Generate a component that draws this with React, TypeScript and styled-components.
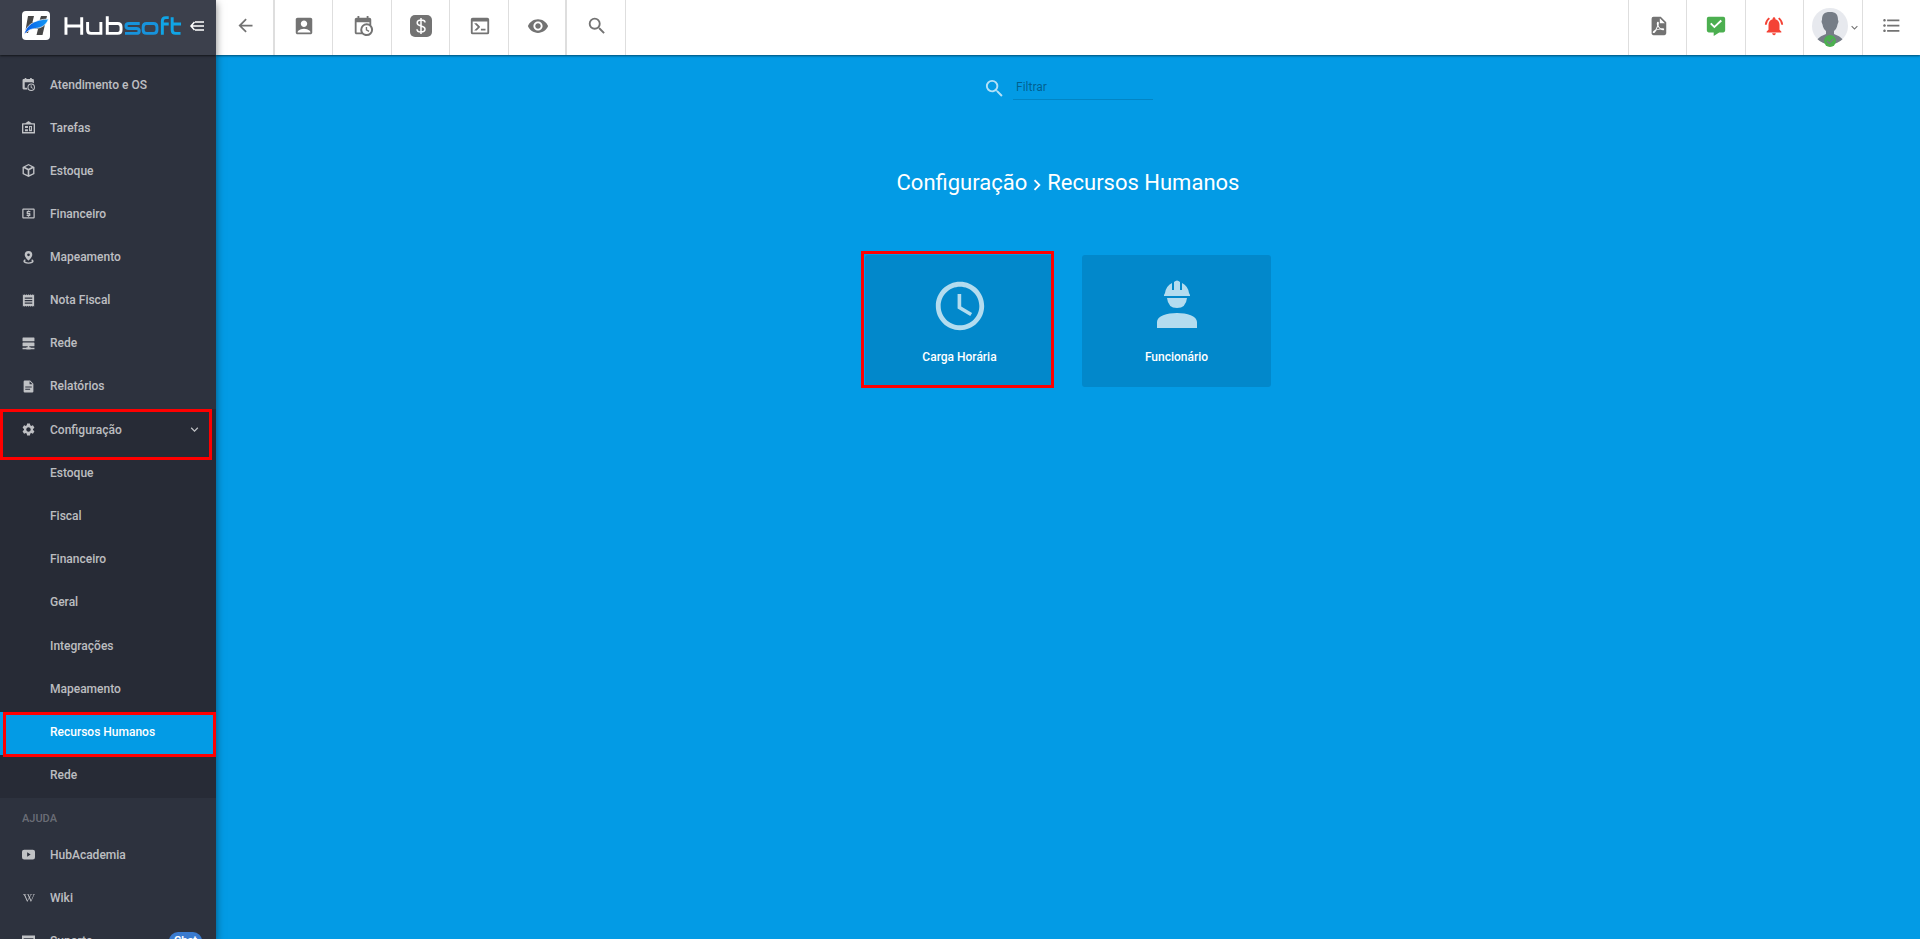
import React from 'react';
import styled, { createGlobalStyle } from 'styled-components';
import {
  MdAccountBox, MdVisibility, MdSearch, MdArrowBack, MdNotificationsActive, MdFormatListBulleted,
  MdReceipt, MdSettings, MdLocalAtm, MdKeyboardArrowDown, MdAccessTime, MdChevronRight,
} from 'react-icons/md';
import { FaWikipediaW } from 'react-icons/fa';

const Global = createGlobalStyle`
  * { box-sizing: border-box; }
  body { margin: 0; font-family: Roboto, "Liberation Sans", sans-serif; font-size: 13px; background: #039be5; }
  button { font: inherit; border: 0; background: none; padding: 0; color: inherit; cursor: pointer; }
  ul { list-style: none; margin: 0; padding: 0; }
  svg { display: block; flex: none; }
`;

const Page = styled.div`display: flex; height: 100vh; overflow: hidden;`;

const Sidebar = styled.aside`
  position: relative; z-index: 2; flex: 0 0 216px; overflow: hidden;
  background: #2d323e; color: rgba(255, 255, 255, 0.7);
  box-shadow: 0 3px 8px rgba(0, 0, 0, 0.5);
`;
const Brand = styled.header`
  display: flex; align-items: center; height: 55px; padding: 0 12px 4px 22px;
  background: #3c404c; box-shadow: 0 1px 2px rgba(0, 0, 0, 0.6); position: relative;
`;
const Wordmark = styled.svg`margin-left: 14px;`;
const Collapse = styled.button`margin-left: 7px; color: #fff;`;
const Nav = styled.nav`padding-top: 9px;`;
const Rows = styled.ul<{ $height: number; $dark?: boolean }>`
  display: grid; grid-auto-rows: 1fr; height: ${p => p.$height}px;
  background: ${p => (p.$dark ? 'rgba(0, 0, 0, 0.13)' : 'transparent')};
`;
const Item = styled.li`position: relative; display: flex;`;
const Link = styled.a<{ $active?: boolean; $child?: boolean }>`
  flex: 1; display: flex; align-items: center; gap: 15px;
  padding: 0 14px 2px ${p => (p.$child ? 50 : 22)}px;
  color: ${p => (p.$active ? '#fff' : 'inherit')};
  background: ${p => (p.$active ? '#039be5' : 'transparent')};
  font-size: 12px; line-height: 18px; font-weight: 500; text-decoration: none;
`;
const Glyph = styled.span`flex: 0 0 13px; min-width: 0; display: flex; justify-content: center;`;
const Label = styled.span`flex: 1;`;
const Section = styled.h2`
  margin: 0; height: 36px; padding: 12px 22px 0; color: rgba(255, 255, 255, 0.3);
  font-size: 11px; line-height: 18px; font-weight: 500;
`;
const Chat = styled.span`
  background: #3a7bd0; color: #fff; border-radius: 9px; padding: 0 5px; height: 18px;
  font-size: 11px; line-height: 18px; font-weight: 700;
`;
const Mark = styled.span<{ $inset: string }>`
  position: absolute; inset: ${p => p.$inset}; border: 3px solid #f00; pointer-events: none; z-index: 3;
`;

const Main = styled.main`flex: 1; min-width: 0; display: flex; flex-direction: column; background: #039be5;`;
const Toolbar = styled.div`
  flex: 0 0 55px; display: flex; justify-content: space-between; background: #fff; color: #737373;
  box-shadow: 0 1px 2px rgba(0, 0, 0, 0.5); position: relative;
`;
const Group = styled.div<{ $width: number; $end?: boolean }>`
  display: grid; grid-auto-flow: column; grid-auto-columns: 1fr; width: ${p => p.$width}px;
  > button {
    border: 0 solid #dedede; border-width: ${p => (p.$end ? '0 0 0 1px' : '0 1px 0 0')};
    padding-left: ${p => (p.$end ? 0 : 2)}px;
  }
`;
const Tool = styled.button<{ $color?: string; $heavy?: boolean; $user?: boolean }>`
  display: flex; align-items: center; justify-content: center; padding-bottom: 4px;
  color: ${p => p.$color || 'inherit'};
  && { ${p => (p.$heavy ? 'border-right-width: 2px;' : '')} ${p => (p.$user ? 'padding: 0 0 0 8px;' : '')} }
`;
const Content = styled.section`display: flex; flex-direction: column; align-items: center; color: #fff;`;
const Filter = styled.label`
  display: flex; align-items: center; gap: 7px; margin: 20px 0 0; color: rgba(255, 255, 255, 0.7);
  svg { margin-top: 2px; }
`;
const Input = styled.input`
  width: 140px; height: 25px; padding: 0 3px 1px; border: 0; border-bottom: 1px solid rgba(0, 0, 0, 0.14);
  background: none; outline: 0; color: #fff; font: 12px/20px Roboto, sans-serif;
  &::placeholder { color: rgba(0, 0, 0, 0.4); opacity: 1; }
`;
const Title = styled.h1`
  display: flex; align-items: center; margin: 67px 0 0; font-size: 22px; line-height: 32px; font-weight: 400;
  svg { margin: 4px -1px 0; }
`;
const Cards = styled.div`display: flex; gap: 28px; margin-top: 56px;`;
const CardWrap = styled.div`position: relative; display: flex;`;
const Card = styled.button`
  width: 189px; height: 132px; display: flex; flex-direction: column; align-items: center; gap: 12px;
  padding-top: 22px; border-radius: 3px;
  && { background: #0288cb; color: #fff; }
  font-size: 12px; line-height: 20px; font-weight: 500;
  svg { color: #b3dcef; }
`;

const P = ({ d, size = 22 }: { d: string; size?: number }) => (
  <svg width={size} height={size} viewBox="0 0 24 24" fill="currentColor" fillRule="evenodd" aria-hidden="true"><path d={d} /></svg>
);

const calendarClock = 'M15,13H16.5V15.82L18.94,17.23L18.19,18.53L15,16.69V13M19,8H5V19H9.67C9.24,18.09 9,17.07 9,16A7,7 0 0,1 16,9C17.07,9 18.09,9.24 19,9.67V8M5,21C3.89,21 3,20.1 3,19V5C3,3.89 3.89,3 5,3H6V1H8V3H16V1H18V3H19A2,2 0 0,1 21,5V11.1C22.24,12.36 23,14.09 23,16A7,7 0 0,1 16,23C14.09,23 12.36,22.24 11.1,21H5M16,11.15A4.85,4.85 0 0,0 11.15,16C11.15,18.68 13.32,20.85 16,20.85A4.85,4.85 0 0,0 20.85,16C20.85,13.32 18.68,11.15 16,11.15Z';
const consoleIcon = 'M20,19V7H4V19H20M20,3A2,2 0 0,1 22,5V19A2,2 0 0,1 20,21H4A2,2 0 0,1 2,19V5C2,3.89 2.9,3 4,3H20M13,17V15H18V17H13M9.58,13L5.57,9H8.4L11.7,12.3C12.09,12.69 12.09,13.33 11.7,13.72L8.42,17H5.59L9.58,13Z';
const pdf = 'M14,9H19.5L14,3.5V9M7,2H15L21,8V20A2,2 0 0,1 19,22H7C5.89,22 5,21.1 5,20V4A2,2 0 0,1 7,2M11.93,12.44C12.34,13.34 12.86,14.08 13.46,14.59L13.87,14.91C13,15.07 11.8,15.35 10.53,15.84L10.42,15.88L10.92,14.84C11.37,13.97 11.7,13.18 11.93,12.44M18.41,16.25C18.59,16.07 18.68,15.84 18.69,15.59C18.72,15.39 18.67,15.2 18.57,15.04C18.28,14.57 17.53,14.35 16.29,14.35L15,14.42L14.13,13.84C13.5,13.32 12.93,12.41 12.53,11.28L12.57,11.14C12.9,9.81 13.21,8.2 12.55,7.54C12.39,7.38 12.17,7.3 11.94,7.3H11.7C11.33,7.3 11,7.69 10.91,8.07C10.54,9.4 10.76,10.13 11.13,11.34C10.88,12.23 10.56,13.25 10.05,14.28L9.09,16.08L8.2,16.57C7,17.32 6.43,18.16 6.32,18.69C6.28,18.88 6.3,19.05 6.37,19.23L6.4,19.28L6.88,19.59L7.32,19.7C8.13,19.7 9.05,18.75 10.29,16.63L10.47,16.56C11.5,16.23 12.78,16 14.5,15.81C15.53,16.32 16.74,16.55 17.5,16.55C17.94,16.55 18.24,16.44 18.41,16.25Z';
const calendarSolid = 'M5 0h3v2h7V0h3v2h2a2 2 0 0 1 2 2v6a7 7 0 0 0-3-1.500V8H5v10h4a8 8 0 0 0 1 3H3a2 2 0 0 1-2-2V4a2 2 0 0 1 2-2h2zM17 10a7 7 0 1 1 0 14a7 7 0 0 1 0-14zM17 12a5 5 0 1 0 0 10a5 5 0 0 0 0-10zM16 13.500v4.200l3.500 2 .8-1.300-2.500-1.500v-3.400z';
const badge = 'M12 0l6 4h5a1 1 0 0 1 1 1v17a1 1 0 0 1-1 1H1a1 1 0 0 1-1-1V5a1 1 0 0 1 1-1h5zM2.500 6.500v14h19v-14zM5.500 9h5.500v4H5.500zM13 9h5.500v10H13zM15 11v5h1.500v-5zM5.500 15h5.500v4H5.500z';
const box = 'M12 0l11 5.500v13L12 24 1 18.500v-13zM12 2.500L6 5.600l6 3 6-3zM3.500 8v9l7 3.500V11.500zM20.500 8l-7 3.500v9l7-3.500z';
const pin = 'M12 0a7 7 0 0 1 7 7C19 11.500 12 18 12 18S5 11.500 5 7A7 7 0 0 1 12 0zM12 4.500a2.500 2.500 0 1 0 0 5a2.500 2.500 0 0 0 0-5zM5.500 15l1.500 2c-3 1.500-1.500 4 5 4s8-2.500 5-4l1.500-2c6 3.500 2.500 8.500-6.500 8.500S-.5 18.500 5.500 15z';
const server = 'M2 1h20a1 1 0 0 1 1 1v5a1 1 0 0 1-1 1H2a1 1 0 0 1-1-1V2a1 1 0 0 1 1-1zM2 10h20a1 1 0 0 1 1 1v5a1 1 0 0 1-1 1h-8.500v2H16v1h7v2.500h-7V23H8v-.5H1V20h7v-1h2.500v-2H2a1 1 0 0 1-1-1v-5a1 1 0 0 1 1-1z';
const doc = 'M5 1h10l6 6v14a2 2 0 0 1-2 2H5a2 2 0 0 1-2-2V3a2 2 0 0 1 2-2zM14 2.500V8h5.500zM6 12v2h12v-2zM6 16v2h9v-2z';
const tube = 'M4 3h16a4 4 0 0 1 4 4v10a4 4 0 0 1-4 4H4a4 4 0 0 1-4-4V7a4 4 0 0 1 4-4zM9.500 8v8l6.500-4z';
const support = 'M0 1h24v21H0zM3 6v13h18V6z';
const chatCheck = 'M4 2h16a2 2 0 0 1 2 2v13a2 2 0 0 1-2 2h-4.500L9.500 23v-4H4a2 2 0 0 1-2-2V4a2 2 0 0 1 2-2zM10.200 14.500L18.500 6.800l-1.500-1.500-6.800 6.300-3.200-3.200L5.500 9.900z';

const items: [string, React.ReactNode][] = [
  ['Atendimento e OS', <P size={13} d={calendarSolid} />],
  ['Tarefas', <P size={13} d={badge} />],
  ['Estoque', <P size={13} d={box} />],
  ['Financeiro', <MdLocalAtm size={15} />],
  ['Mapeamento', <P size={13} d={pin} />],
  ['Nota Fiscal', <MdReceipt size={15} />],
  ['Rede', <P size={13} d={server} />],
  ['Relatórios', <P size={13} d={doc} />],
];
const children = ['Estoque', 'Fiscal', 'Financeiro', 'Geral', 'Integrações', 'Mapeamento', 'Recursos Humanos', 'Rede'];

const Logo = () => (
  <svg width="28" height="29" viewBox="0 0 28 29" aria-hidden="true">
    <defs><linearGradient id="swoosh"><stop offset="0" stopColor="#0557e8" /><stop offset="1" stopColor="#149cf5" /></linearGradient></defs>
    <rect width="28" height="29" rx="4" fill="#fff" />
    <path d="M6 5h6l-1.500 6h6.500L19 5h6l-4.500 19h-6l1.500-6H7l-1 4H3z" fill="#474747" />
    <path d="M2 24C4 14 12 8.500 26.500 8c-2 6-7 9-13 9.500C8 18 5 20 2 24z" fill="url(#swoosh)" stroke="#fff" strokeWidth=".7" />
  </svg>
);

const HubWord = () => (
  <Wordmark width="119" height="20" viewBox="0 0 121 20" fill="none" strokeWidth="3" role="img" aria-label="Hubsoft">
    <g stroke="#fff"><path d="M2 1v18M18 1v18M2 10h16M24 6v8q0 3.500 3.500 3.500H37.500V6M44 0v17.500h10.500q3.500 0 3.500-3.500v-3q0-3.500-3.500-3.500H44" /></g>
    <g stroke="#1793dc"><path d="M77 7.500H66q-3 0-3 2.500t3 2.500h7.500q3 0 3 2.500t-3 2.500H62M84 7.500h7q3.500 0 3.500 3.500v3q0 3.500-3.500 3.500h-7q-3.500 0-3.500-3.500v-3q0-3.500 3.500-3.500z" /></g>
    <g stroke="#10a5e6"><path d="M100 19V5q0-3.500 3.500-3.500h3M100 8h6.500M110 1v13q0 3.500 3.500 3.500h5M110 8h9" /></g>
  </Wordmark>
);

const Avatar = () => (
  <svg width="36" height="39" viewBox="0 0 36 39" aria-hidden="true">
    <circle cx="18" cy="18" r="18" fill="#e7e9ee" />
    <path d="M18 4c6 0 8 2.500 8 8 1 2 0 3-.5 4.500-.5 3-1.500 5-3.500 6.500v3c4 1.500 6.500 3 8.500 5.200A18 18 0 0 1 5.500 31.200C7.500 29 10 27.500 14 26v-3c-2-1.500-3-3.500-3.500-6.500C10 15 9 14 10 12c0-5.500 2-8 8-8z" fill="#767d87" />
    <circle cx="18" cy="33" r="6" fill="#4caf50" />
    <path d="M15 33l2.300 2.300 4-4.300" stroke="#767d87" fill="none" strokeWidth="1.300" />
  </svg>
);

const Worker = () => (
  <svg width="58" height="58" viewBox="-2 -1 58 58" fill="currentColor" aria-hidden="true">
    <path d="M24 4q3-3 6 0v8h2V5q6 3 7 10l1 2v1H14v-1l1-2q1-7 7-10v7h2zM17 20h20q-1 10-10 10T17 20zM7 50v-6c0-12 40-12 40 0v6z" />
  </svg>
);

export default function App() {
  return (
    <Page>
      <Global />
      <Sidebar>
        <Brand>
          <Logo />
          <HubWord />
          <Collapse aria-label="Recolher menu">
            <svg width="14" height="10" viewBox="0 0 14 10" fill="none" stroke="currentColor" strokeWidth="1.500"><path d="M5 1h9M1 5h13M5 9h9M4.500 1L1 5l3.500 4" /></svg>
          </Collapse>
        </Brand>
        <Nav>
          <Rows $height={345}>
            {items.map(([text, icon]) => (
              <Item key={text}><Link href="#"><Glyph>{icon}</Glyph><Label>{text}</Label></Link></Item>
            ))}
          </Rows>
          <Rows $height={389} $dark>
            <Item>
              <Link href="#"><Glyph><MdSettings size={15} /></Glyph><Label>Configuração</Label><MdKeyboardArrowDown size={15} /></Link>
              <Mark $inset="0 4px -8px 0" />
            </Item>
            {children.map(text => {
              const active = text === 'Recursos Humanos';
              return (
                <Item key={text}>
                  <Link href="#" $child $active={active}><Label>{text}</Label></Link>
                  {active && <Mark $inset="0 0 -2px 3px" />}
                </Item>
              );
            })}
          </Rows>
          <Section>AJUDA</Section>
          <Rows $height={130}>
            <Item><Link href="#"><Glyph><P size={13} d={tube} /></Glyph><Label>HubAcademia</Label></Link></Item>
            <Item><Link href="#"><Glyph><FaWikipediaW size={12} /></Glyph><Label>Wiki</Label></Link></Item>
            <Item><Link href="#"><Glyph><P size={13} d={support} /></Glyph><Label>Suporte</Label><Chat>Chat</Chat></Link></Item>
          </Rows>
        </Nav>
      </Sidebar>
      <Main>
        <Toolbar>
          <Group $width={410}>
            <Tool $heavy aria-label="Voltar"><MdArrowBack size={21} /></Tool>
            <Tool aria-label="Clientes"><MdAccountBox size={22} /></Tool>
            <Tool aria-label="Agenda"><P d={calendarClock} /></Tool>
            <Tool aria-label="Financeiro">
              <svg width="22" height="22" viewBox="0 0 22 22"><rect width="22" height="22" rx="5" fill="currentColor" /><path d="M15 7.500C15 5.700 13.200 5 11 5S7.200 6 7.200 8c0 4 7.800 2 7.800 6 0 2-1.800 3-4 3s-4-1-4-2.800M11 3v16" fill="none" stroke="#fff" strokeWidth="1.500" /></svg>
            </Tool>
            <Tool aria-label="Terminal"><P d={consoleIcon} /></Tool>
            <Tool $heavy aria-label="Visualizar"><MdVisibility size={22} /></Tool>
            <Tool aria-label="Pesquisar"><MdSearch size={22} /></Tool>
          </Group>
          <Group $width={292} $end>
            <Tool aria-label="Relatórios PDF"><P d={pdf} /></Tool>
            <Tool aria-label="Mensagens" $color="#4caf50"><P d={chatCheck} /></Tool>
            <Tool aria-label="Notificações" $color="#f44336"><MdNotificationsActive size={22} /></Tool>
            <Tool aria-label="Usuário" $user><Avatar /><MdKeyboardArrowDown size={13} /></Tool>
            <Tool aria-label="Menu"><MdFormatListBulleted size={21} /></Tool>
          </Group>
        </Toolbar>
        <Content>
          <Filter><MdSearch size={23} /><Input placeholder="Filtrar" aria-label="Filtrar" /></Filter>
          <Title>Configuração<MdChevronRight size={22} />Recursos Humanos</Title>
          <Cards>
            <CardWrap><Card><MdAccessTime size={58} />Carga Horária</Card><Mark $inset="-4px 0 -1px -4px" /></CardWrap>
            <CardWrap><Card><Worker />Funcionário</Card></CardWrap>
          </Cards>
        </Content>
      </Main>
    </Page>
  );
}
